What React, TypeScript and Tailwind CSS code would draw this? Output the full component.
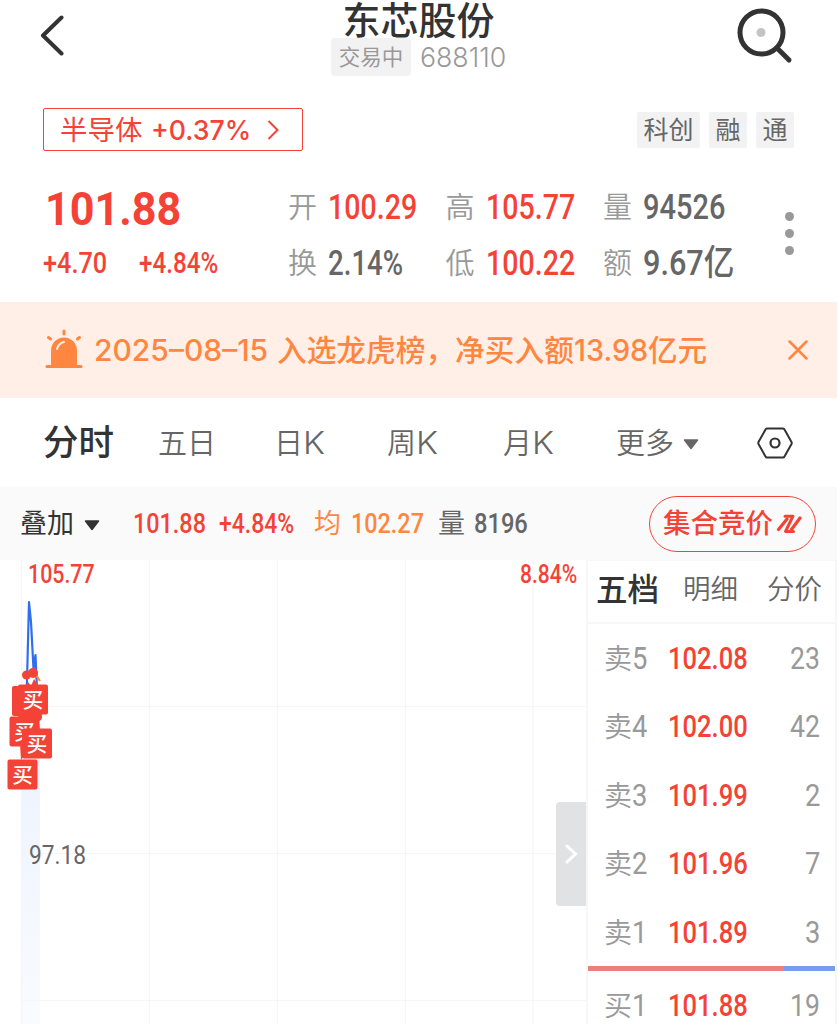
import { useLayoutEffect, useRef, useState } from "react";
import clsx from "clsx";

interface INumProps {
  children: string;
  className?: string;
  inter?: boolean;
}

// Condensed numerals: the text is squeezed to the width of its box
const Num = ({ children, className, inter }: INumProps) => {
  const box = useRef<HTMLSpanElement>(null);
  const text = useRef<HTMLSpanElement>(null);
  const [scale, setScale] = useState(1);

  useLayoutEffect(() => {
    if (box.current && text.current) {
      setScale(box.current.clientWidth / text.current.offsetWidth);
    }
  }, [children]);

  return (
    <span
      ref={box}
      className={clsx(
        "block shrink-0 whitespace-nowrap",
        inter
          ? "font-['Inter','Noto_Sans_CJK_SC',sans-serif]"
          : "font-['Roboto','Noto_Sans_CJK_SC',sans-serif]",
        className,
      )}
    >
      <span
        ref={text}
        className="inline-block origin-left"
        style={{ transform: `scaleX(${scale})` }}
      >
        {children}
      </span>
    </span>
  );
};

const Caret = ({ className }: { className?: string }) => (
  <svg viewBox="0 0 16 11" className={clsx("h-[11px] w-4", className)}>
    <path
      d="M1.5 1h13L8 9.5z"
      fill="currentColor"
      stroke="currentColor"
      strokeWidth="1.5"
      strokeLinejoin="round"
    />
  </svg>
);

const stats = [
  [
    { label: "开", value: "100.29", width: "w-[89px]", up: true },
    { label: "换", value: "2.14%", width: "w-[75px]", up: false },
  ],
  [
    { label: "高", value: "105.77", width: "w-[89px]", up: true },
    { label: "低", value: "100.22", width: "w-[89px]", up: true },
  ],
  [
    { label: "量", value: "94526", width: "w-[82px]", up: false },
    { label: "额", value: "9.67亿", width: "w-[91px]", up: false },
  ],
];

const asks = [
  { side: "卖", level: "5", price: "102.08", volume: "23", width: "w-[30px]" },
  { side: "卖", level: "4", price: "102.00", volume: "42", width: "w-[30px]" },
  { side: "卖", level: "3", price: "101.99", volume: "2", width: "w-[15px]" },
  { side: "卖", level: "2", price: "101.96", volume: "7", width: "w-[15px]" },
  { side: "卖", level: "1", price: "101.89", volume: "3", width: "w-[15px]" },
];

const bids = [
  { side: "买", level: "1", price: "101.88", volume: "19", width: "w-[30px]" },
];

const markers = [
  { x: 12, y: 686, label: "" },
  { x: 9.5, y: 716.5, label: "买" },
  { x: 18, y: 684.5, label: "买" },
  { x: 22, y: 728.5, label: "买" },
  { x: 7.5, y: 759.5, label: "买" },
];

const Header = () => (
  <header className="flex h-[80px] items-start justify-between pr-[44px] pl-[40px]">
    <svg viewBox="0 0 24 42" className="mt-[15px] h-[42px] w-6" fill="none">
      <path
        d="M21.5 2.5 3 20.5l18.500 18"
        stroke="#333"
        strokeWidth="4"
        strokeLinecap="round"
        strokeLinejoin="round"
      />
    </svg>
    <div className="flex flex-col items-center pl-[36px]">
      <h1 className="h-[38px] text-[38px] leading-[40px] font-medium whitespace-nowrap text-[#333]">
        东芯股份
      </h1>
      <div className="flex items-center gap-[9px]">
        <span className="h-[38px] rounded bg-[#f2f2f2] px-[8px] text-[21.500px] leading-[39px] text-[#999]">
          交易中
        </span>
        <Num
          inter
          className="h-[38px] w-[86px] text-[27px] leading-[39px] font-light text-[#999]"
        >
          688110
        </Num>
      </div>
    </div>
    <svg viewBox="0 0 56 56" className="mt-[8px] h-14 w-14" fill="none">
      <circle cx="24.500" cy="24.500" r="21.500" stroke="#333" strokeWidth="5" />
      <path
        d="m40 40 12 12"
        stroke="#333"
        strokeWidth="5"
        strokeLinecap="round"
      />
      <circle cx="24" cy="24.500" r="4.500" fill="#c4c4c4" />
    </svg>
  </header>
);

const TagRow = () => (
  <div className="flex h-[99px] items-start justify-between pt-[28px] pr-[43px] pl-[43px]">
    <div className="flex h-[43px] w-[260px] items-center rounded-[2px] border-[1.500px] border-[#f44336] pl-[16px] text-[27.500px] text-[#f44336]">
      <span className="leading-[42px]">半导体</span>
      <Num
        inter
        className="ml-[8px] w-[100px] text-[27.500px] leading-[42px] font-[450]"
      >
        +0.37%
      </Num>
      <svg viewBox="0 0 12 20" className="ml-[16px] h-5 w-3" fill="none">
        <path d="m1.500 1 9 9-9 9" stroke="#f44336" strokeWidth="2" />
      </svg>
    </div>
    <div className="mt-[4px] flex gap-[9px] text-[25px] leading-[37px] text-[#666]">
      {["科创", "融", "通"].map((tag) => (
        <span
          key={tag}
          className="h-[36px] rounded-[2px] bg-[#f2f2f2] px-[6.500px]"
        >
          {tag}
        </span>
      ))}
    </div>
  </div>
);

const Quote = () => (
  <section className="flex h-[123px] text-[#f44336]">
    <div className="w-[288px] pl-[43px]">
      <Num className="ml-[2px] w-[136px] text-[46px] leading-[60px] font-bold">
        101.88
      </Num>
      <div className="flex gap-[32px]">
        <Num className="w-[64px] text-[30px] leading-[48px] font-medium">
          +4.70
        </Num>
        <Num className="w-[79px] text-[30px] leading-[48px] font-medium">
          +4.84%
        </Num>
      </div>
    </div>
    <div className="flex pt-px">
      {stats.map((column, i) => (
        <div key={i} className="w-[157.500px]">
          {column.map((item) => (
            <div key={item.label} className="flex h-[55.500px] items-center">
              <span className="w-[40px] text-[29px] font-[350] text-[#999]">
                {item.label}
              </span>
              <Num
                className={clsx(
                  "text-[35px] leading-[55px] font-medium",
                  item.width,
                  item.up ? "text-[#f44336]" : "text-[#666]",
                )}
              >
                {item.value}
              </Num>
            </div>
          ))}
        </div>
      ))}
    </div>
    <div className="mt-[33px] ml-[24.500px] flex flex-col gap-2">
      <i className="size-[9px] rounded-full bg-[#999]" />
      <i className="size-[9px] rounded-full bg-[#999]" />
      <i className="size-[9px] rounded-full bg-[#999]" />
    </div>
  </section>
);

const Banner = () => (
  <section className="flex h-[96px] items-center bg-[#ffefe7] pl-[45px] text-[#ff8640]">
    <svg viewBox="0 0 38 40" className="-mt-[2px] h-10 w-[38px]" fill="none">
      <path
        d="M19 2v3M3.500 8.500l2 1.500M34.500 8.500l-2 1.500"
        stroke="currentColor"
        strokeWidth="3"
        strokeLinecap="round"
      />
      <path d="M6 37V21.500a13 13 0 0 1 26 0V37z" fill="currentColor" />
      <path
        d="M2 37.500h34"
        stroke="currentColor"
        strokeWidth="3"
        strokeLinecap="round"
      />
      <path
        d="M12 20c1-4 3-6 7-7"
        stroke="#ffefe7"
        strokeWidth="2"
        strokeLinecap="round"
      />
    </svg>
    <Num inter className="ml-[11px] w-[174px] text-[30px] font-[450]">
      2025–08–15
    </Num>
    <span className="ml-[9px] pt-px text-[29.700px] font-[450]">
      入选龙虎榜，净买入额
    </span>
    <Num inter className="w-[74px] text-[30px] font-[450]">
      13.98
    </Num>
    <span className="pt-px text-[29.600px] font-[450]">亿元</span>
    <svg viewBox="0 0 20 20" className="ml-[81px] size-5" fill="none">
      <path
        d="m1.500 1.500 17 17m0-17-17 17"
        stroke="currentColor"
        strokeWidth="2.500"
        strokeLinecap="round"
      />
    </svg>
  </section>
);

const PeriodTab = ({ label, className }: { label: string; className: string }) => (
  <span className={clsx("flex items-center pt-[2px]", className)}>
    {label}
    <Num inter className="w-[22px] text-[31px]">
      K
    </Num>
  </span>
);

const Tabs = () => (
  <nav className="flex h-[89px] items-center pl-[43px] text-[29px] font-[350] text-[#666]">
    <span className="w-[115px] text-[35.500px] font-medium text-[#333]">
      分时
    </span>
    <span className="w-[116px] pt-[2px]">五日</span>
    <PeriodTab label="日" className="w-[113px]" />
    <PeriodTab label="周" className="w-[116px]" />
    <PeriodTab label="月" className="w-[113px]" />
    <span className="pt-[2px]">更多</span>
    <Caret className="ml-[9px] mt-[3px]" />
    <svg viewBox="0 0 36 32" className="ml-[58px] h-8 w-9" fill="none">
      <path
        d="M10 1.500h16q1 0 1.500 1L34.500 15q.5 1 0 2l-7 12.500q-.5 1-1.500 1H10q-1 0-1.500-1L1.500 17q-.5-1 0-2l7-12.500q.5-1 1.500-1z"
        stroke="#333"
        strokeWidth="2"
      />
      <circle cx="18" cy="16" r="4.500" stroke="#333" strokeWidth="2.200" />
    </svg>
  </nav>
);

const Toolbar = () => (
  <section className="flex h-[73px] items-center bg-[#fafafa] pl-[20px] text-[#f44336]">
    <span className="pt-px text-[27px] text-[#333]">叠加</span>
    <Caret className="mt-[3px] ml-[10px] text-[#333]" />
    <Num className="ml-[33px] w-[73px] pt-[2px] text-[28.500px] font-medium">
      101.88
    </Num>
    <Num className="ml-[13px] w-[75px] pt-[2px] text-[28.500px] font-medium">
      +4.84%
    </Num>
    <span className="ml-[20px] pt-px text-[27px] text-[#ff8640]">均</span>
    <Num className="ml-[10px] w-[73px] pt-[2px] text-[28.500px] font-medium text-[#ff8640]">
      102.27
    </Num>
    <span className="ml-[14px] pt-px text-[27px] text-[#666]">量</span>
    <Num className="ml-[9px] w-[54px] pt-[2px] text-[28.500px] font-medium text-[#666]">
      8196
    </Num>
    <button className="ml-[121px] flex h-[56px] w-[167px] items-center rounded-full border-[1.500px] border-[#f44336] pl-[13px] text-[27.500px] font-medium">
      集合竞价
      <svg viewBox="0 0 26 20" className="ml-[3px] h-5 w-[26px]" fill="none">
        <path
          d="M2.500 15.500 11 5M24 4l-8.500 11.500"
          stroke="currentColor"
          strokeWidth="3.200"
          strokeLinecap="round"
        />
        <path
          d="M9 2.200h8L9.500 17.500h8"
          stroke="currentColor"
          strokeWidth="3"
          strokeLinecap="round"
          strokeLinejoin="round"
        />
      </svg>
    </button>
  </section>
);

const Chart = () => (
  <section className="relative h-[464px] w-[586px] shrink-0">
    <svg viewBox="0 560 586 464" className="block h-[464px] w-[586px]">
      <defs>
        <linearGradient id="area" x1="0" y1="0" x2="0" y2="1">
          <stop offset="0" stopColor="#eaf1fe" />
          <stop offset="1" stopColor="#fafbff" />
        </linearGradient>
      </defs>
      <rect x="22" y="690" width="18" height="334" fill="url(#area)" />
      <path
        d="M21.500 560v464M149.500 560v464M277.500 560v464M405.500 560v464M533 560v464M22 706.500h564M22 853.500h564M22 1000.500h564"
        stroke="#f6f6f6"
        strokeWidth="1.200"
      />
      <path
        d="M26.500 700 29 602l2 20 2.500 47 2-14 1.500 35"
        fill="none"
        stroke="#2f6fed"
        strokeWidth="2.200"
        strokeLinejoin="round"
      />
      <path d="m36 675 4 6" fill="none" stroke="#ff8c1a" strokeWidth="2" />
      <g fill="#f44336">
        <circle cx="26.500" cy="675" r="4.500" />
        <circle cx="33" cy="673" r="5" />
        <path d="m24 688 4-6 3 4 3-7 4 6z" />
        <circle cx="38" cy="717" r="4" />
        <path d="M18 712h20l2 20-19 28z" />
      </g>
      {markers.map((marker, i) => (
        <g key={i}>
          <rect
            x={marker.x}
            y={marker.y}
            width="30"
            height="30"
            rx="2"
            fill="#f44336"
          />
          <text
            x={marker.x + 15}
            y={marker.y + 23}
            textAnchor="middle"
            fontSize="20.500"
            fontWeight="500"
            fill="#fff"
          >
            {marker.label}
          </text>
        </g>
      ))}
    </svg>
    <Num className="absolute top-[-1px] left-[28px] w-[67px] text-[25.500px] leading-[30px] font-medium text-[#f44336]">
      105.77
    </Num>
    <Num className="absolute top-[-1px] right-[9px] w-[57px] text-[25.500px] leading-[30px] font-medium text-[#f44336]">
      8.84%
    </Num>
    <Num className="absolute top-[280px] left-[29px] w-[57px] text-[25.500px] leading-[30px] font-[450] text-[#666]">
      97.18
    </Num>
    <div className="absolute top-[242px] right-0 flex h-[104px] w-[30px] items-center justify-center rounded-l bg-[#e0e2e3]">
      <svg viewBox="0 0 13 20" className="h-5 w-[13px]" fill="none">
        <path
          d="m2 2 8.500 8L2 18"
          stroke="#fff"
          strokeWidth="3"
          strokeLinecap="round"
        />
      </svg>
    </div>
  </section>
);

const OrderRow = ({ row }: { row: (typeof asks)[number] }) => (
  <div className="flex h-[68.500px] items-center pt-px pr-[15px] pl-[16px]">
    <span className="text-[28px] font-[350] text-[#999]">{row.side}</span>
    <Num className="w-[15px] text-[31px] font-[450] text-[#999]">
      {row.level}
    </Num>
    <Num className="ml-[21px] w-[80px] text-[31px] font-medium text-[#f44336]">
      {row.price}
    </Num>
    <Num
      className={clsx("ml-auto text-[31px] font-[450] text-[#999]", row.width)}
    >
      {row.volume}
    </Num>
  </div>
);

const OrderBook = () => (
  <section className="h-[464px] w-[251px] overflow-hidden border-x-2 border-t border-[#f7f7f7]">
    <div className="flex h-[63px] items-center border-b-2 border-[#f7f7f7] pb-[3px] pl-[8px] text-[27.500px] font-[350] text-[#666]">
      <span className="w-[87px] text-[31.500px] font-medium text-[#333]">
        五档
      </span>
      <span className="w-[84px]">明细</span>
      <span className="whitespace-nowrap">分价</span>
    </div>
    {asks.map((row) => (
      <OrderRow key={row.level} row={row} />
    ))}
    <div className="-mx-px -mt-px mb-px flex h-[5px]">
      <div className="w-[197px] bg-[#ef7f78]" />
      <div className="flex-1 bg-[#7a9cec]" />
    </div>
    {bids.map((row) => (
      <OrderRow key={row.level} row={row} />
    ))}
  </section>
);

const App = () => {
  return (
    <div className="h-[1024px] w-[837px] overflow-hidden bg-white font-['Inter','Noto_Sans_CJK_SC',sans-serif]">
      <Header />
      <TagRow />
      <Quote />
      <Banner />
      <Tabs />
      <Toolbar />
      <div className="flex">
        <Chart />
        <OrderBook />
      </div>
    </div>
  );
};

export default App;
